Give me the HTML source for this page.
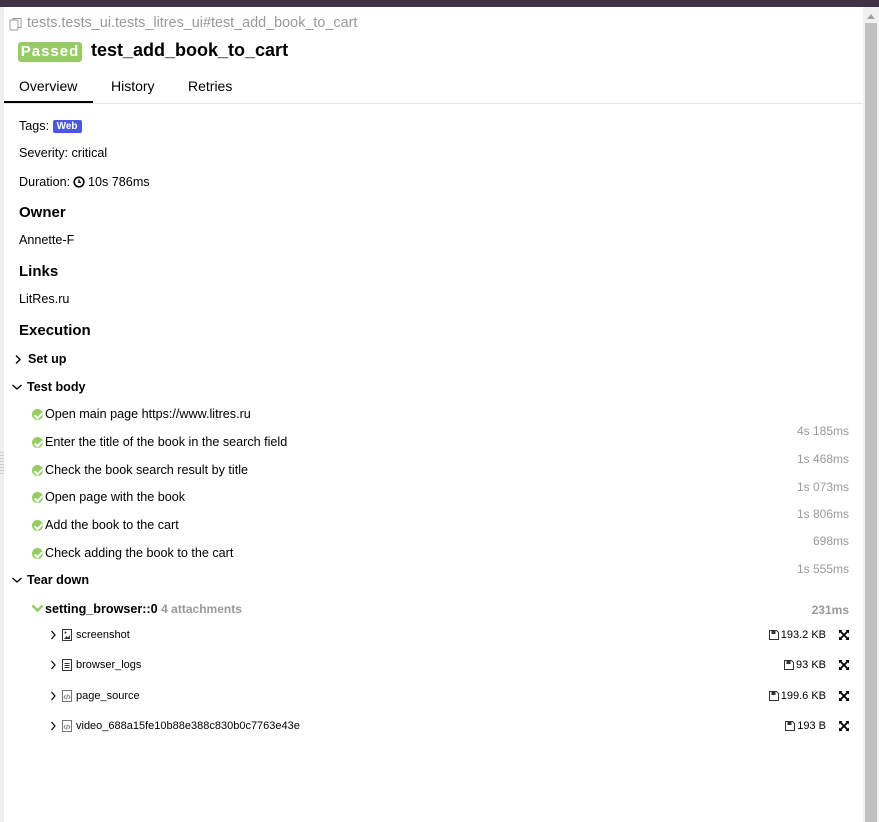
<!DOCTYPE html>
<html><head><meta charset="utf-8"><style>
*{margin:0;padding:0;box-sizing:border-box}
body{width:879px;height:822px;overflow:hidden;background:#fff;font-family:"Liberation Sans",Arial,sans-serif;color:#000;position:relative}
.a{position:absolute;white-space:nowrap}
.t13{font-size:13px}
.st{font-size:12.6px}
.h{font-size:15px;font-weight:bold}
.ms{color:#999;font-size:12px;right:30px}
.ok{position:absolute;left:32px;width:11px;height:11px;border-radius:50%;background:#97cc64}
.ok:after{content:"";position:absolute;left:3.5px;top:1.5px;width:3px;height:6px;border:solid #fff;border-width:0 2px 2px 0;transform:rotate(45deg)}
.att{font-size:11px}
svg{position:absolute}
</style></head><body>
<div class="a" style="left:0;top:0;width:879px;height:7px;background:#3f3244"></div>
<div class="a" style="left:0;top:7px;width:4px;height:815px;background:#eee"></div>
<div class="a" style="left:0;top:452px;width:4px;height:24px;background:repeating-linear-gradient(#ccc 0 1px,#eee 1px 3px)"></div>
<div class="a" style="left:863px;top:7px;width:16px;height:815px;background:#f1f1f1"></div>
<div class="a" style="left:865px;top:23px;width:12px;height:799px;background:#c1c1c1"></div>
<div class="a" style="left:867px;top:14px;width:0;height:0;border-left:4px solid transparent;border-right:4px solid transparent;border-bottom:5px solid #a3a3a3"></div>

<svg style="left:9px;top:17px" width="14" height="14" viewBox="0 0 14 14"><rect x="1" y="3" width="8" height="10" rx="1" fill="none" stroke="#999"/><path d="M4 3V1.5h8v9H9" fill="none" stroke="#999"/></svg>
<div class="a" style="left:27px;top:15px;font-size:14.4px;color:#999">tests.tests_ui.tests_litres_ui#test_add_book_to_cart</div>
<div class="a" style="left:18px;top:42px;width:64px;height:20px;background:#97cc64;border-radius:3px;color:#fff;font-weight:bold;font-size:15px;text-align:center;line-height:20px;letter-spacing:1px">Passed</div>
<div class="a" style="left:91px;top:40px;font-size:18px;font-weight:bold">test_add_book_to_cart</div>
<div class="a" style="left:19px;top:78px;font-size:14px">Overview</div>
<div class="a" style="left:111px;top:78px;font-size:14px">History</div>
<div class="a" style="left:188px;top:78px;font-size:14px">Retries</div>
<div class="a" style="left:4px;top:103px;width:859px;height:1px;background:#e5e5e5"></div>
<div class="a" style="left:4px;top:101px;width:89px;height:2px;background:#000"></div>

<div class="a st" style="left:19px;top:119px">Tags: <span style="display:inline-block;background:#4b57e0;color:#fff;font-size:10px;font-weight:bold;padding:1px 4px;border-radius:2px;vertical-align:1px">Web</span></div>
<div class="a st" style="left:19px;top:146px">Severity: critical</div>
<div class="a st" style="left:19px;top:175px">Duration:</div>
<svg style="left:73px;top:176px" width="12" height="12" viewBox="0 0 12 12"><circle cx="6" cy="6" r="4.8" fill="none" stroke="#000" stroke-width="1.6"/><path d="M6 3.5V6.3H8" fill="none" stroke="#000" stroke-width="1.4"/></svg>
<div class="a st" style="left:88px;top:175px">10s 786ms</div>
<div class="a h" style="left:19px;top:204px">Owner</div>
<div class="a st" style="left:19px;top:233px">Annette-F</div>
<div class="a h" style="left:19px;top:263px">Links</div>
<div class="a st" style="left:19px;top:292px">LitRes.ru</div>
<div class="a h" style="left:19px;top:322px">Execution</div>

<svg style="left:14px;top:354px" width="8" height="11" viewBox="0 0 8 11"><path d="M2 1.5l4 4-4 4" fill="none" stroke="#000" stroke-width="1.4"/></svg>
<div class="a st" style="left:28px;top:352px;font-weight:bold">Set up</div>
<svg style="left:11px;top:383px" width="12" height="8" viewBox="0 0 12 8"><path d="M1.5 2l4.5 4 4.5-4" fill="none" stroke="#000" stroke-width="1.3"/></svg>
<div class="a st" style="left:27px;top:380px;font-weight:bold">Test body</div>

<span class="ok" style="top:409px"></span><div class="a st" style="left:45px;top:407px">Open main page https://www.litres.ru</div>
<div class="a ms" style="top:424px">4s 185ms</div>
<span class="ok" style="top:437px"></span><div class="a st" style="left:45px;top:435px">Enter the title of the book in the search field</div>
<div class="a ms" style="top:452px">1s 468ms</div>
<span class="ok" style="top:465px"></span><div class="a st" style="left:45px;top:463px">Check the book search result by title</div>
<div class="a ms" style="top:480px">1s 073ms</div>
<span class="ok" style="top:492px"></span><div class="a st" style="left:45px;top:490px">Open page with the book</div>
<div class="a ms" style="top:507px">1s 806ms</div>
<span class="ok" style="top:520px"></span><div class="a st" style="left:45px;top:518px">Add the book to the cart</div>
<div class="a ms" style="top:534px">698ms</div>
<span class="ok" style="top:548px"></span><div class="a st" style="left:45px;top:546px">Check adding the book to the cart</div>
<div class="a ms" style="top:562px">1s 555ms</div>

<svg style="left:11px;top:576px" width="12" height="8" viewBox="0 0 12 8"><path d="M1.5 2l4.5 4 4.5-4" fill="none" stroke="#000" stroke-width="1.3"/></svg>
<div class="a st" style="left:27px;top:573px;font-weight:bold">Tear down</div>
<svg style="left:31px;top:604px" width="13" height="9" viewBox="0 0 13 9"><path d="M1.5 1.5l5 5 5-5" fill="none" stroke="#97cc64" stroke-width="2.6"/></svg>
<div class="a st" style="left:45px;top:602px;font-weight:bold">setting_browser::0 <span style="color:#999;font-size:12px">4 attachments</span></div>
<div class="a" style="right:30px;top:603px;color:#999;font-size:12px;font-weight:bold">231ms</div>

<svg style="left:50px;top:630px" width="7" height="10" viewBox="0 0 7 10"><path d="M1.5 1l3.5 4-3.5 4" fill="none" stroke="#000" stroke-width="1.2"/></svg>
<svg style="left:62px;top:629px" width="10" height="12" viewBox="0 0 10 12"><rect x=".5" y=".5" width="9" height="11" fill="none" stroke="#333"/><path d="M2 10l2.5-3 1.5 1.5 2-2.5V10z" fill="#333"/><circle cx="3.5" cy="3.5" r="1" fill="#333"/></svg>
<div class="a att" style="left:76px;top:629px">screenshot</div>
<svg style="left:50px;top:660px" width="7" height="10" viewBox="0 0 7 10"><path d="M1.5 1l3.5 4-3.5 4" fill="none" stroke="#000" stroke-width="1.2"/></svg>
<svg style="left:62px;top:659px" width="10" height="12" viewBox="0 0 10 12"><rect x=".5" y=".5" width="9" height="11" fill="none" stroke="#333"/><path d="M2.5 4.5h5M2.5 6.5h5M2.5 8.5h5" stroke="#333"/></svg>
<div class="a att" style="left:76px;top:659px">browser_logs</div>
<svg style="left:50px;top:691px" width="7" height="10" viewBox="0 0 7 10"><path d="M1.5 1l3.5 4-3.5 4" fill="none" stroke="#000" stroke-width="1.2"/></svg>
<svg style="left:62px;top:690px" width="10" height="12" viewBox="0 0 10 12"><rect x=".5" y=".5" width="9" height="11" fill="none" stroke="#777"/><path d="M3.5 5l-1.5 2 1.5 2M6.5 5l1.5 2-1.5 2M5.5 4.5l-1 5" fill="none" stroke="#777" stroke-width=".9"/></svg>
<div class="a att" style="left:76px;top:690px">page_source</div>
<svg style="left:50px;top:721px" width="7" height="10" viewBox="0 0 7 10"><path d="M1.5 1l3.5 4-3.5 4" fill="none" stroke="#000" stroke-width="1.2"/></svg>
<svg style="left:62px;top:720px" width="10" height="12" viewBox="0 0 10 12"><rect x=".5" y=".5" width="9" height="11" fill="none" stroke="#777"/><path d="M3.5 5l-1.5 2 1.5 2M6.5 5l1.5 2-1.5 2M5.5 4.5l-1 5" fill="none" stroke="#777" stroke-width=".9"/></svg>
<div class="a att" style="left:76px;top:720px">video_688a15fe10b88e388c830b0c7763e43e</div>

<div class="a att" style="right:53px;top:629px">193.2 KB</div>
<div class="a att" style="right:53px;top:659px">93 KB</div>
<div class="a att" style="right:53px;top:690px">199.6 KB</div>
<div class="a att" style="right:53px;top:720px">193 B</div>
<svg style="left:769px;top:630px" width="10" height="10" viewBox="0 0 10 10"><path d="M.5.5h7l2 2v7H.5z" fill="none" stroke="#333"/><rect x="2.5" y="1" width="4" height="3" fill="#333"/></svg>
<svg style="left:784px;top:660px" width="10" height="10" viewBox="0 0 10 10"><path d="M.5.5h7l2 2v7H.5z" fill="none" stroke="#333"/><rect x="2.5" y="1" width="4" height="3" fill="#333"/></svg>
<svg style="left:769px;top:691px" width="10" height="10" viewBox="0 0 10 10"><path d="M.5.5h7l2 2v7H.5z" fill="none" stroke="#333"/><rect x="2.5" y="1" width="4" height="3" fill="#333"/></svg>
<svg style="left:785px;top:721px" width="10" height="10" viewBox="0 0 10 10"><path d="M.5.5h7l2 2v7H.5z" fill="none" stroke="#333"/><rect x="2.5" y="1" width="4" height="3" fill="#333"/></svg>
<svg style="left:839px;top:630px" width="10" height="10" viewBox="0 0 10 10"><path d="M1 1l8 8M9 1L1 9" stroke="#000" stroke-width="1.8"/><path d="M0 0h3.5L0 3.5zM10 0v3.5L6.5 0zM0 10v-3.5L3.5 10zM10 10H6.5L10 6.5z" fill="#000"/></svg>
<svg style="left:839px;top:660px" width="10" height="10" viewBox="0 0 10 10"><path d="M1 1l8 8M9 1L1 9" stroke="#000" stroke-width="1.8"/><path d="M0 0h3.5L0 3.5zM10 0v3.5L6.5 0zM0 10v-3.5L3.5 10zM10 10H6.5L10 6.5z" fill="#000"/></svg>
<svg style="left:839px;top:691px" width="10" height="10" viewBox="0 0 10 10"><path d="M1 1l8 8M9 1L1 9" stroke="#000" stroke-width="1.8"/><path d="M0 0h3.5L0 3.5zM10 0v3.5L6.5 0zM0 10v-3.5L3.5 10zM10 10H6.5L10 6.5z" fill="#000"/></svg>
<svg style="left:839px;top:721px" width="10" height="10" viewBox="0 0 10 10"><path d="M1 1l8 8M9 1L1 9" stroke="#000" stroke-width="1.8"/><path d="M0 0h3.5L0 3.5zM10 0v3.5L6.5 0zM0 10v-3.5L3.5 10zM10 10H6.5L10 6.5z" fill="#000"/></svg>
</body></html>
